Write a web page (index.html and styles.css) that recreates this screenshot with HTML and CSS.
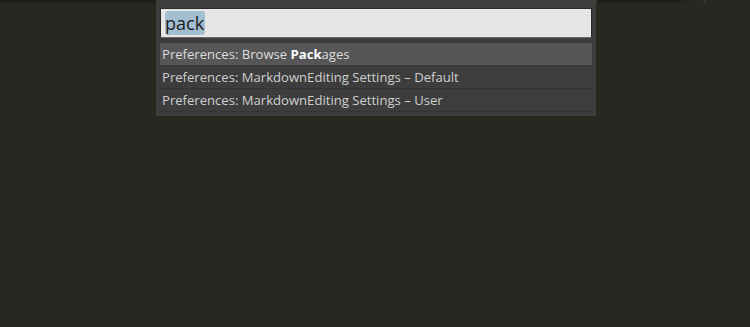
FILE: index.html
```html
<!DOCTYPE html>
<html lang="en">
<head>
  <meta charset="UTF-8">
  <title>Command Palette</title>
  <link rel="stylesheet" href="styles.css">
</head>
<body>

  <!-- Tab strip -->
  <div class="tabbar">
    <span class="tab"></span>
    <span class="tab"></span>
    <span class="tab"></span>
    <span class="tab"></span>
    <span class="tab"></span>
    <span class="tab"></span>
  </div>

  <!-- Command palette -->
  <div class="palette">
    <div class="search">
      <span class="sel">pack</span>
    </div>
    <ul class="results">
      <li class="active">Preferences: Browse <b>Pack</b>ages</li>
      <li>Preferences: MarkdownEditing Settings – Default</li>
      <li>Preferences: MarkdownEditing Settings – User</li>
    </ul>
  </div>

</body>
</html>
```

FILE: styles.css
```css
/* General Body Styling */
body {
  margin: 0;
  padding: 0;
  background-color: #272822;
  font-family: 'Open Sans', 'Noto Sans', sans-serif;
  height: 327px;
  overflow: hidden;
}

/* Tab strip */
.tabbar {
  display: flex;
  width: 705px;
  height: 3px;
  background: linear-gradient(to right, #1e1f1b 0%, #1e1f1b 95%, #2a2b26 100%);
}

.tab {
  width: 113px;
  border-right: 1px solid #3a3a36;
}

.tab:first-child {
  width: 170px;
}

/* Palette */
.palette {
  position: absolute;
  top: 0;
  left: 156px;
  width: 432px;
  padding: 8px 4px 4px;
  background-color: #3d3d3d;
}

.search {
  height: 28px;
  background-color: #e6e6e6;
  border: 1px solid #2a2a2a;
  border-bottom-color: #6a6a6a;
  padding: 0 4px;
  display: flex;
  align-items: center;
}

.sel {
  background-color: #a2bfd1;
  border-radius: 3px;
  color: #1b1b1b;
  font-size: 18px;
  line-height: 24px;
  padding: 0 1px 0 0;
}

.results {
  list-style: none;
  margin: 5px 0 0;
  padding: 0;
}

.results li {
  height: 22px;
  line-height: 23px;
  padding-left: 2px;
  font-size: 13.1px;
  color: #cfcfcf;
  border-bottom: 1px solid #353535;
  white-space: nowrap;
}

.results li.active {
  background-color: #565656;
  color: #dcdcdc;
}

.results b {
  color: #ffffff;
  font-weight: 700;
}
```
